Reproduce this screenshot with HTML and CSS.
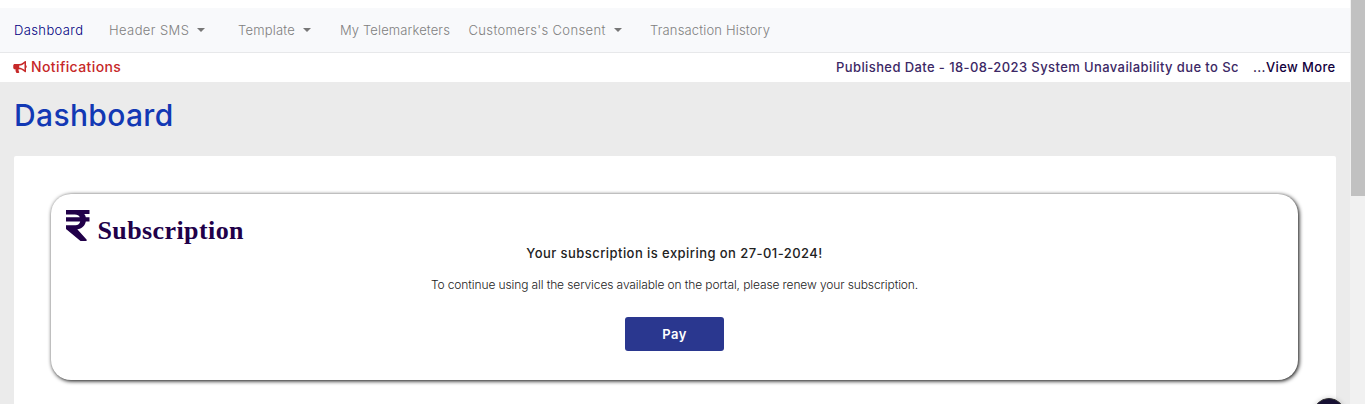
FILE: index.html
```html
<!DOCTYPE html>
<html lang="en">
<head>
<meta charset="utf-8">
<title>Dashboard</title>
<link rel="stylesheet" href="styles.css">
</head>
<body>
<div class="window">
  <div class="page">
    <nav class="nav">
      <a class="nav-item active">Dashboard</a>
      <a class="nav-item header-sms">Header SMS<i class="caret"></i></a>
      <a class="nav-item template">Template<i class="caret"></i></a>
      <a class="nav-item telemarketers">My Telemarketers</a>
      <a class="nav-item consent">Customers's Consent<i class="caret"></i></a>
      <a class="nav-item history">Transaction History</a>
    </nav>
    <div class="notice">
      <svg class="horn" viewBox="0 0 576 512"><path fill="currentColor" d="M576 240c0-24-13-44-32-55V32c0-9-7-32-32-32-7 0-14 2-20 7l-85 68c-43 34-96 53-151 53H64c-35 0-64 29-64 64v96c0 35 29 64 64 64h34c-2 10-2 21-2 32 0 40 9 77 26 111 5 11 17 17 29 17h74c26 0 42-30 26-51-16-21-26-48-26-77 0-11 2-22 5-32h26c55 0 108 19 151 53l85 68c6 5 13 7 20 7 25 0 32-22 32-32V295c19-11 32-31 32-55zm-96 141l-33-26c-54-43-122-67-191-67v-96c69 0 137-24 191-67l33-26v282z"/></svg>
      <span class="notice-title">Notifications</span>
      <div class="ticker"><span class="ticker-text">Published Date - 18-08-2023 System Unavailability due to Sc</span></div>
      <a class="more">...View More</a>
    </div>
    <main class="main">
      <h1 class="title">Dashboard</h1>
      <div class="panel">
        <section class="card">
          <header class="card-head">
            <svg class="rupee" viewBox="0 0 24 32"><path fill="currentColor" d="M0 0h23.500v4h-5.200q1.200 1.600 1.500 3.300h3.700v4.200h-3.700c-.8 4.400-4 7.300-8.500 7.800L20.500 29.500c.6.600.4 1.500-.6 1.500h-5.400L.6 19.600q-.6-.5-.6-1.200v-3.200h9.500c2.500 0 4.200-1.400 4.700-3.700H0V7.300h13.800c-.8-2.100-2.400-2.900-5-2.900H0z"/></svg>
            <h2 class="card-title">Subscription</h2>
          </header>
          <p class="expiry">Your subscription is expiring on 27-01-2024!</p>
          <p class="renew">To continue using all the services available on the portal, please renew your subscription.</p>
          <button class="pay">Pay</button>
        </section>
      </div>
    </main>
  </div>
  <div class="scrollbar"><div class="thumb"></div></div>
  <div class="fab"></div>
</div>
</body>
</html>
```

FILE: styles.css
```css
* { box-sizing: border-box; }
body { margin: 0; font-family: Inter, "Liberation Sans", sans-serif; }
.window { position: relative; display: flex; width: 1365px; height: 404px; overflow: hidden; background: #fff; }
.page { width: 1350px; padding-top: 8px; display: flex; flex-direction: column; }
.nav { height: 45px; flex: none; display: flex; align-items: center; padding-left: 14px; background: #f8f9fb; border-bottom: 1px solid #e7e8ea; }
.nav-item { display: flex; align-items: center; white-space: nowrap; font-size: 13px; font-weight: 300; letter-spacing: .38px; color: #808080; width: 95px; }
.active { color: #000080; }
.header-sms { width: 129px; letter-spacing: .4px; }
.template { width: 102px; letter-spacing: .2px; }
.telemarketers { width: 128.500px; letter-spacing: .12px; }
.consent { width: 181.500px; letter-spacing: .36px; }
.history { width: auto; letter-spacing: .16px; }
.caret { margin-left: 8px; border: 4px solid transparent; border-top-color: #777; border-bottom: 0; }
.notice { height: 29px; flex: none; display: flex; align-items: center; padding: 0 0 2px 13px; }
.horn { width: 14px; height: 12px; margin-top: 1px; color: #c62828; }
.notice-title { width: 805px; padding-left: 4px; font-size: 14px; font-weight: 450; letter-spacing: .4px; color: #c62828; }
.ticker { width: 406px; overflow: hidden; white-space: nowrap; padding-left: 4px; }
.ticker-text { font-size: 13px; font-weight: 500; letter-spacing: .4px; color: #3c2865; }
.more { padding-left: 15px; white-space: nowrap; font-size: 13px; font-weight: 500; letter-spacing: .37px; color: #12003c; }
.notice-title, .ticker, .more { line-height: 18px; }
.main { flex: 1; padding: 0 14px; background: #ebebeb; }
.title { margin: 0; height: 74px; line-height: 66px; font-size: 30px; font-weight: 500; letter-spacing: .35px; color: #1238b4; }
.panel { height: 260px; padding: 38px 37px; background: #fff; border-radius: 2px; }
.card { width: 1247px; height: 186px; display: flex; flex-direction: column; align-items: center; border-radius: 20px; box-shadow: 1px 1px 4px #000; background: #fff; }
.card-head { align-self: stretch; height: 49px; display: flex; padding: 16px 0 0 14.500px; }
.rupee { width: 24px; height: 32px; color: #210049; }
.card-title { margin: 5px 0 0 8px; font: bold 26px/32px "Liberation Serif", serif; letter-spacing: .4px; color: #210049; }
.expiry { margin: 0; line-height: 20px; font-size: 13px; font-weight: 500; letter-spacing: .44px; color: #222; }
.renew { margin: 12px 0 0; line-height: 20px; font-size: 12px; font-weight: 300; letter-spacing: -.11px; color: #222; }
.pay { width: 99px; height: 34px; margin: 22px 0 0; padding: 0; border: 0; border-radius: 3px; background: #2a378f; color: #fff; font: 600 13px Inter, sans-serif; letter-spacing: .4px; }
.scrollbar { width: 15px; padding-left: 1px; background: #f1f1f1; }
.thumb { height: 196px; background: #c1c1c1; }
.fab { position: absolute; left: 1313px; top: 398px; width: 32px; height: 32px; border-radius: 50%; background: #171033; border: 1px solid #333; box-shadow: 0 0 5px #0003; }
```
